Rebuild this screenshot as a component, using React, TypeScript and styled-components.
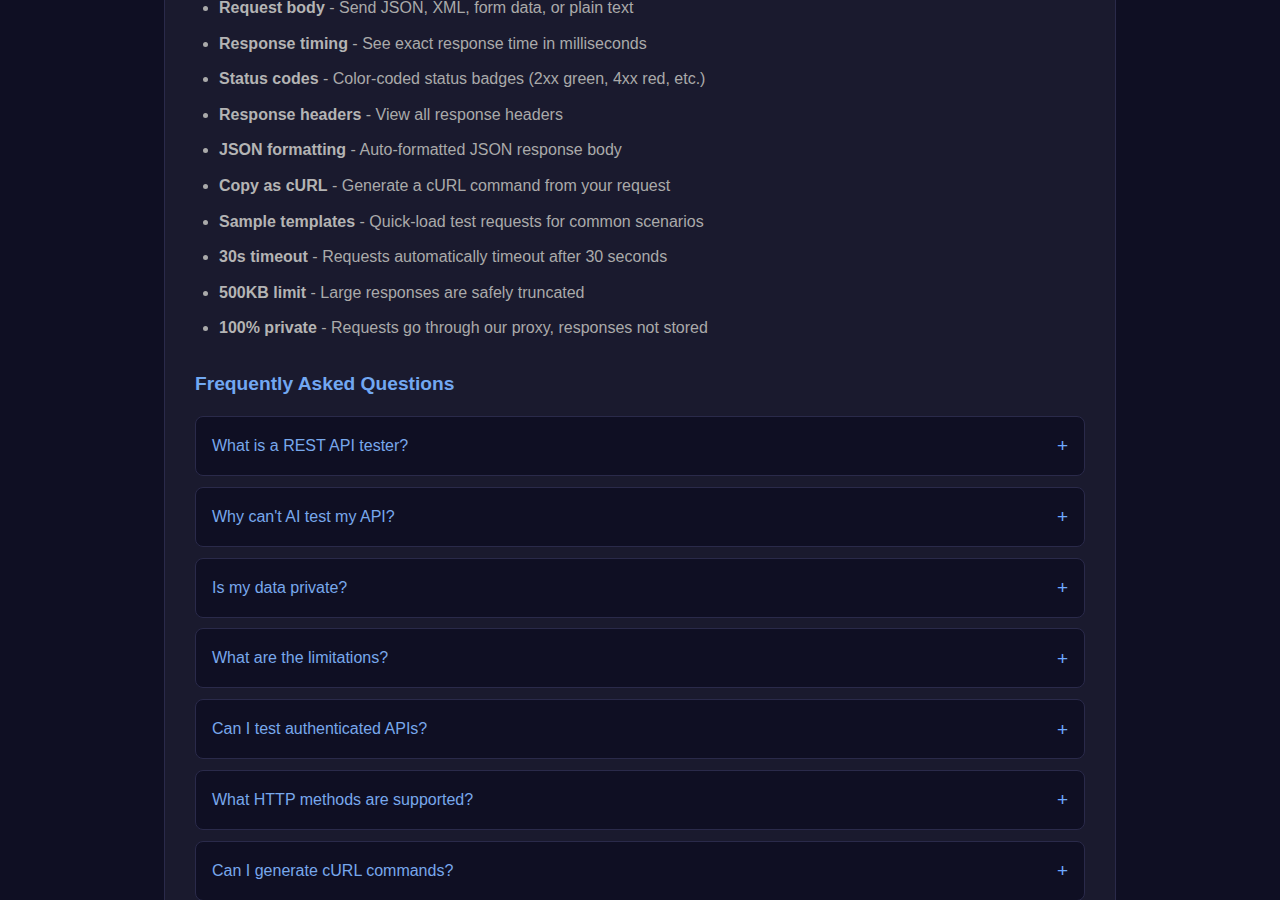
import styled, { createGlobalStyle } from 'styled-components'

const GlobalStyle = createGlobalStyle`
  html, body {
    margin: 0;
    padding: 0;
    background: #0f0f23;
    font-family: "Liberation Sans", Arial, sans-serif;
    overflow: hidden;
  }
`

const features = [
  { title: 'Request body', text: 'Send JSON, XML, form data, or plain text' },
  { title: 'Response timing', text: 'See exact response time in milliseconds' },
  { title: 'Status codes', text: 'Color-coded status badges (2xx green, 4xx red, etc.)' },
  { title: 'Response headers', text: 'View all response headers' },
  { title: 'JSON formatting', text: 'Auto-formatted JSON response body' },
  { title: 'Copy as cURL', text: 'Generate a cURL command from your request' },
  { title: 'Sample templates', text: 'Quick-load test requests for common scenarios' },
  { title: '30s timeout', text: 'Requests automatically timeout after 30 seconds' },
  { title: '500KB limit', text: 'Large responses are safely truncated' },
  { title: '100% private', text: 'Requests go through our proxy, responses not stored' },
]

const questions = [
  'What is a REST API tester?',
  "Why can't AI test my API?",
  'Is my data private?',
  'What are the limitations?',
  'Can I test authenticated APIs?',
  'What HTTP methods are supported?',
  'Can I generate cURL commands?',
]

export default function App() {
  return (
    <>
      <GlobalStyle />
      <Page>
        <Container>
          <FeatureList>
            {features.map((f) => (
              <li key={f.title}>
                <strong>{f.title}</strong> - {f.text}
              </li>
            ))}
          </FeatureList>
          <Heading>Frequently Asked Questions</Heading>
          {questions.map((q) => (
            <FaqItem key={q}>
              <Question>
                <span>{q}</span>
                <Plus>+</Plus>
              </Question>
            </FaqItem>
          ))}
        </Container>
      </Page>
    </>
  )
}

const Page = styled.div`
  height: 900px;
  overflow: hidden;
`

const Container = styled.div`
  max-width: 890px;
  margin: 0 auto;
  padding: 0 30px 40px;
  background: #1a1a2e;
  border-left: 1px solid #2a2a4a;
  border-right: 1px solid #2a2a4a;
  min-height: 900px;
`

const FeatureList = styled.ul`
  margin: -5px 0 0;
  padding-left: 24px;
  color: #aaaaaa;
  font-size: 16px;
  li {
    line-height: 25.6px;
    margin-bottom: 10px;
  }
  li:last-child {
    margin-bottom: 0;
  }
  strong {
    color: #b4b4b4;
    font-weight: bold;
  }
`

const Heading = styled.h2`
  margin: 31px 0 21px;
  font-size: 19.2px;
  line-height: 23px;
  font-weight: bold;
  color: #72a8f2;
`

const FaqItem = styled.div`
  background: #0f0f23;
  border: 1px solid #2a2a4a;
  border-radius: 8px;
  margin-bottom: 10.8px;
`

const Question = styled.div`
  display: flex;
  align-items: center;
  justify-content: space-between;
  padding: 18px 16px;
  height: 22px;
  box-sizing: content-box;
  font-size: 16px;
  color: #78a8ec;
`

const Plus = styled.span`
  font-size: 19px;
  line-height: 1;
  color: #6ea8fe;
`
